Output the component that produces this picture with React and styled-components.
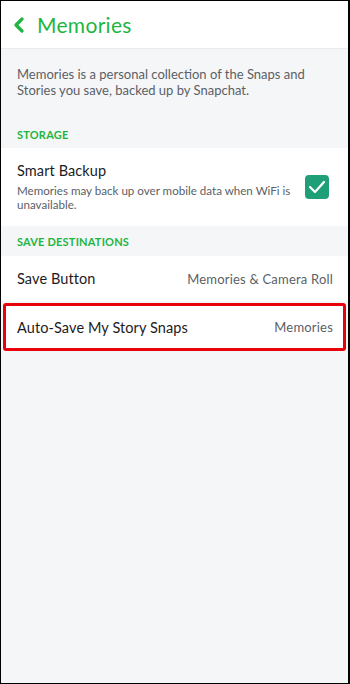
import React from 'react';
import styled, { createGlobalStyle } from 'styled-components';

const GlobalStyle = createGlobalStyle`
  html, body {
    margin: 0;
    padding: 0;
    background: #000;
  }
  * { box-sizing: border-box; }
`;

const GREEN = '#1fb53f';

const Frame = styled.div`
  width: 350px;
  height: 684px;
  border: 1px solid #000;
  border-right-width: 2px;
  background: #f5f6f8;
  font-family: Lato, "Open Sans", sans-serif;
  display: flex;
  flex-direction: column;
  overflow: hidden;
`;

const Header = styled.div`
  height: 47px;
  background: #fff;
  display: flex;
  align-items: center;
  padding-left: 12px;
  gap: 12px;
  box-shadow: 0 1px 1px rgba(0, 0, 0, 0.04);
`;

const Title = styled.h1`
  margin: 0;
  font-size: 21px;
  font-weight: 400;
  color: ${GREEN};
  letter-spacing: 0.3px;
`;

const Intro = styled.p`
  margin: 0;
  padding: 18px 16px 22px;
  font-size: 13px;
  line-height: 16px;
  color: #5b5f66;
`;

const SectionLabel = styled.div`
  height: ${p => p.$h || 30}px;
  display: flex;
  align-items: center;
  padding: 0 16px;
  font-size: 11px;
  font-weight: 700;
  color: ${GREEN};
  text-transform: uppercase;
  letter-spacing: 0.2px;
`;

const Row = styled.div`
  background: #fff;
  display: flex;
  align-items: center;
  justify-content: space-between;
  padding: ${p => p.$pad || '0 15px 0 16px'};
  height: ${p => p.$h}px;
  border: ${p => (p.$highlight ? '3px solid #e8000b' : 'none')};
  border-radius: ${p => (p.$highlight ? '3px' : '0')};
  margin: ${p => (p.$highlight ? '2px 2px 0 2px' : '0')};
`;

const RowText = styled.div`
  display: flex;
  flex-direction: column;
  gap: 5px;
  max-width: 282px;
`;

const RowTitle = styled.div`
  font-size: 14.5px;
  color: #1c1c1e;
  letter-spacing: 0.1px;
`;

const RowHint = styled.div`
  font-size: 11.6px;
  line-height: 14px;
  color: #5b5f66;
`;

const RowValue = styled.div`
  font-size: 13px;
  color: #5b5f66;
  letter-spacing: 0.2px;
`;

const CheckBox = styled.div`
  width: 24px;
  height: 24px;
  border-radius: 4px;
  background: #1e9f78;
  display: flex;
  align-items: center;
  justify-content: center;
  margin-right: 4px;
`;

const Back = () => (
  <svg width="12" height="16" viewBox="0 0 12 16">
    <path d="M9 2 L3 8 L9 14" fill="none" stroke={GREEN} strokeWidth="3.2" strokeLinecap="round" strokeLinejoin="round" />
  </svg>
);

const Check = () => (
  <svg width="18" height="14" viewBox="0 0 18 14">
    <path d="M2 7 L7 12 L16 2" fill="none" stroke="#fff" strokeWidth="2.2" strokeLinecap="round" strokeLinejoin="round" />
  </svg>
);

export default function App() {
  return (
    <>
      <GlobalStyle />
      <Frame>
        <Header>
          <Back />
          <Title>Memories</Title>
        </Header>
        <Intro>
          Memories is a personal collection of the Snaps and Stories you save, backed up by Snapchat.
        </Intro>
        <SectionLabel $h={28}>Storage</SectionLabel>
        <Row $h={78}>
          <RowText>
            <RowTitle>Smart Backup</RowTitle>
            <RowHint>Memories may back up over mobile data when WiFi is unavailable.</RowHint>
          </RowText>
          <CheckBox><Check /></CheckBox>
        </Row>
        <SectionLabel $h={30}>Save Destinations</SectionLabel>
        <Row $h={45}>
          <RowTitle>Save Button</RowTitle>
          <RowValue>Memories &amp; Camera Roll</RowValue>
        </Row>
        <Row $h={48} $highlight $pad="0 10px 0 11px">
          <RowTitle>Auto-Save My Story Snaps</RowTitle>
          <RowValue>Memories</RowValue>
        </Row>
      </Frame>
    </>
  );
}
